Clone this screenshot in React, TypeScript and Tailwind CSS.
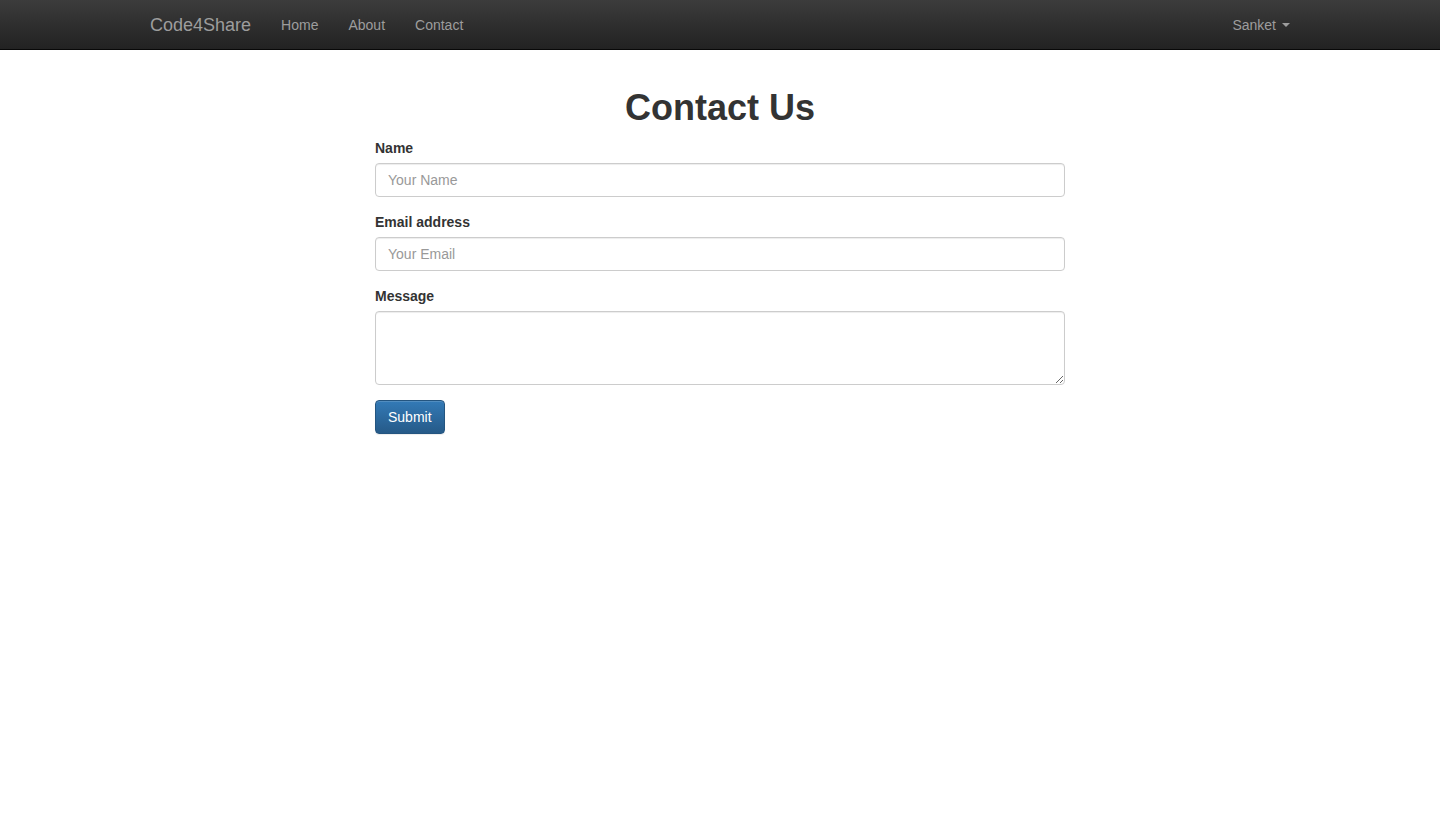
const App = () => {
  return (
    <div className="min-h-[820px] bg-white text-[#333] text-sm font-['Liberation_Sans',Arial,sans-serif]">
      <nav className="h-[50px] bg-gradient-to-b from-[#3c3c3c] to-[#222] border-b border-[#080808]">
        <div className="w-[1170px] mx-auto px-[15px] h-full flex items-center">
          <a className="text-[18px] text-[#9d9d9d] leading-5">Code4Share</a>
          <ul className="flex ml-[15px]">
            <li><a className="block px-[15px] text-[#9d9d9d] leading-5">Home</a></li>
            <li><a className="block px-[15px] text-[#9d9d9d] leading-5">About</a></li>
            <li><a className="block px-[15px] text-[#9d9d9d] leading-5">Contact</a></li>
          </ul>
          <div className="ml-auto flex items-center text-[#9d9d9d] leading-5">
            Sanket
            <span className="ml-[6px] mt-[1px] w-0 h-0 border-x-4 border-x-transparent border-t-4 border-t-[#9d9d9d]"></span>
          </div>
        </div>
      </nav>

      <div className="w-[690px] mx-auto">
        <h1 className="text-center text-[36px] font-bold leading-[1.1] mt-[38px] mb-[10px]">Contact Us</h1>
        <form>
          <div className="mb-[15px]">
            <label className="block font-bold leading-5 mb-[5px]">Name</label>
            <input
              className="w-full h-[34px] px-3 border border-[#ccc] rounded shadow-[inset_0_1px_1px_rgba(0,0,0,0.075)] placeholder:text-[#999] outline-none"
              placeholder="Your Name"
            />
          </div>
          <div className="mb-[15px]">
            <label className="block font-bold leading-5 mb-[5px]">Email address</label>
            <input
              className="w-full h-[34px] px-3 border border-[#ccc] rounded shadow-[inset_0_1px_1px_rgba(0,0,0,0.075)] placeholder:text-[#999] outline-none"
              placeholder="Your Email"
            />
          </div>
          <div className="mb-[15px]">
            <label className="block font-bold leading-5 mb-[5px]">Message</label>
            <textarea
              rows={3}
              className="block w-full h-[74px] px-3 py-[6px] border border-[#ccc] rounded shadow-[inset_0_1px_1px_rgba(0,0,0,0.075)] outline-none"
            ></textarea>
          </div>
          <button
            type="button"
            className="h-[34px] px-3 text-white rounded border border-[#245580] bg-gradient-to-b from-[#337ab7] to-[#265a88] shadow-[inset_0_1px_0_rgba(255,255,255,0.15),0_1px_1px_rgba(0,0,0,0.075)]"
          >
            Submit
          </button>
        </form>
      </div>
    </div>
  );
};

export default App;
